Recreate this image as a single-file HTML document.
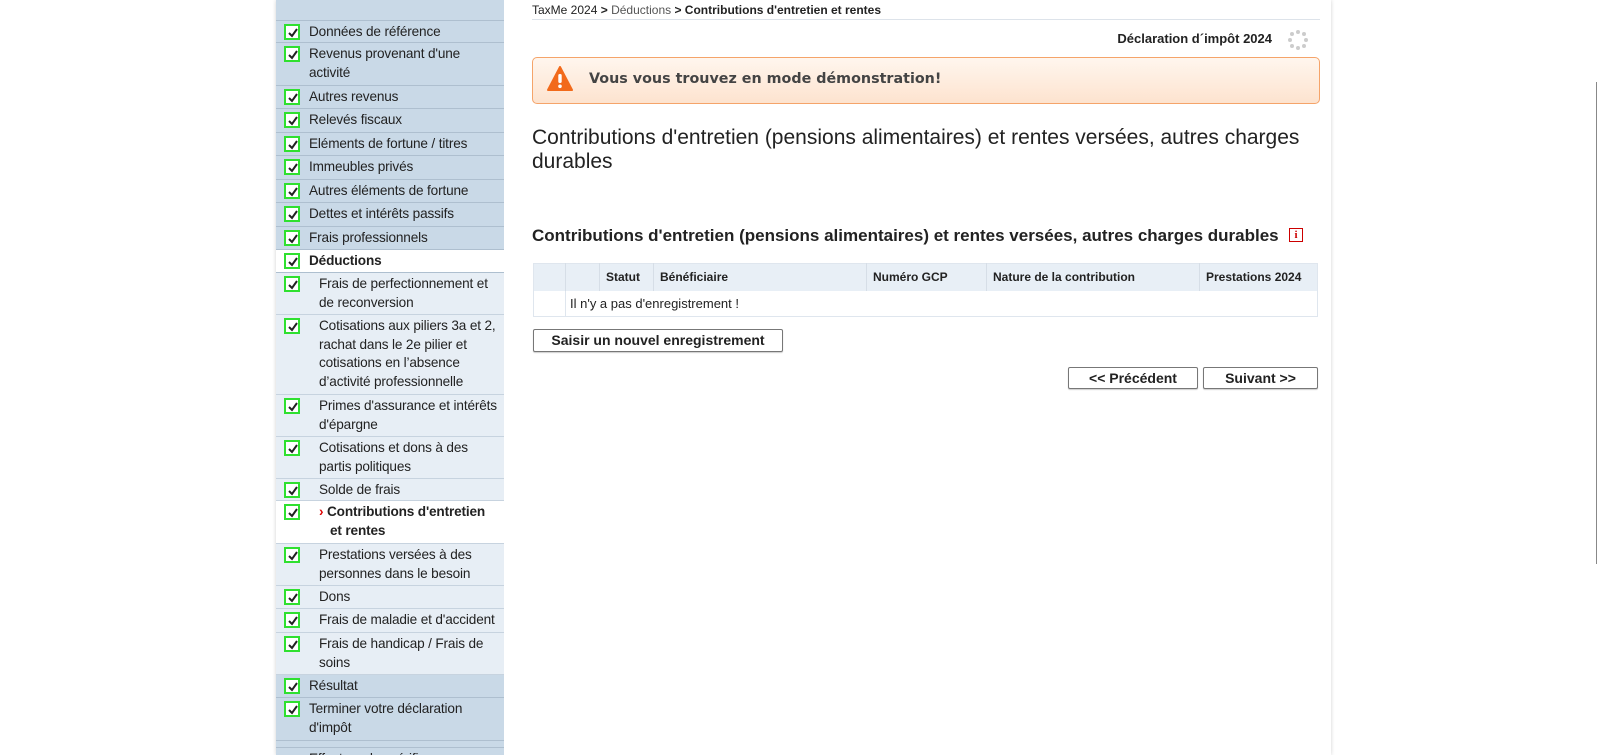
<!DOCTYPE html>
<html><head><meta charset="utf-8"><style>
*{box-sizing:border-box;margin:0;padding:0}
body{width:1600px;height:755px;overflow:hidden;background:#fff;font-family:"Liberation Sans",Arial,sans-serif;color:#222;position:relative}
.wrap{position:absolute;left:276px;top:0;width:1055px;height:755px;background:#fff;box-shadow:0 0 4px rgba(0,0,0,.18)}
.side{position:absolute;left:276px;top:0;width:228px;height:755px;background:#c9d9e7;overflow:hidden}
.row{position:absolute;left:0;width:228px;border-bottom:1px solid #aebfcf;font-size:13.6px;letter-spacing:-0.15px;line-height:18.5px;color:#222;padding:2px 2px 0 33px}
.row.sub{background:#e7eef5;padding-left:43px;border-bottom-color:#c7d3df}
.row.act{background:#fff}
.cb{position:absolute;left:8px;top:3px;width:16px;height:16px;border:2px solid #2fe02f;background:#fff;text-indent:0}
.cb svg{position:absolute;left:1px;top:1px}
.b{font-weight:bold}
.btn{position:absolute;border:1px solid #777;border-radius:2px;background:#fff;font-weight:bold;font-size:14px;text-align:center;line-height:20px;box-shadow:0 1px 1px rgba(0,0,0,.2)}
th,td{font-size:12px;text-align:left}
</style></head><body>
<div class="wrap"></div>
<div class="side">
<div class="row" style="top:0;height:21px"></div>
<div class="row" style="top:21px;height:22px"><span class="cb"><svg width="12" height="12"><path d="M2 6l3 3 5-7" stroke="#222" stroke-width="2" fill="none"/></svg></span>Données de référence</div>
<div class="row" style="top:43px;height:43px"><span class="cb"><svg width="12" height="12"><path d="M2 6l3 3 5-7" stroke="#222" stroke-width="2" fill="none"/></svg></span>Revenus provenant d'une activité</div>
<div class="row" style="top:86px;height:23px"><span class="cb"><svg width="12" height="12"><path d="M2 6l3 3 5-7" stroke="#222" stroke-width="2" fill="none"/></svg></span>Autres revenus</div>
<div class="row" style="top:109px;height:24px"><span class="cb"><svg width="12" height="12"><path d="M2 6l3 3 5-7" stroke="#222" stroke-width="2" fill="none"/></svg></span>Relevés fiscaux</div>
<div class="row" style="top:133px;height:23px"><span class="cb"><svg width="12" height="12"><path d="M2 6l3 3 5-7" stroke="#222" stroke-width="2" fill="none"/></svg></span>Eléments de fortune / titres</div>
<div class="row" style="top:156px;height:24px"><span class="cb"><svg width="12" height="12"><path d="M2 6l3 3 5-7" stroke="#222" stroke-width="2" fill="none"/></svg></span>Immeubles privés</div>
<div class="row" style="top:180px;height:23px"><span class="cb"><svg width="12" height="12"><path d="M2 6l3 3 5-7" stroke="#222" stroke-width="2" fill="none"/></svg></span>Autres éléments de fortune</div>
<div class="row" style="top:203px;height:24px"><span class="cb"><svg width="12" height="12"><path d="M2 6l3 3 5-7" stroke="#222" stroke-width="2" fill="none"/></svg></span>Dettes et intérêts passifs</div>
<div class="row" style="top:227px;height:23px"><span class="cb"><svg width="12" height="12"><path d="M2 6l3 3 5-7" stroke="#222" stroke-width="2" fill="none"/></svg></span>Frais professionnels</div>
<div class="row act b" style="top:250px;height:23px"><span class="cb"><svg width="12" height="12"><path d="M2 6l3 3 5-7" stroke="#222" stroke-width="2" fill="none"/></svg></span>Déductions</div>
<div class="row sub" style="top:273px;height:42px"><span class="cb"><svg width="12" height="12"><path d="M2 6l3 3 5-7" stroke="#222" stroke-width="2" fill="none"/></svg></span>Frais de perfectionnement et de reconversion</div>
<div class="row sub" style="top:315px;height:80px"><span class="cb"><svg width="12" height="12"><path d="M2 6l3 3 5-7" stroke="#222" stroke-width="2" fill="none"/></svg></span>Cotisations aux piliers 3a et 2, rachat dans le 2e pilier et cotisations en l’absence d’activité professionnelle</div>
<div class="row sub" style="top:395px;height:42px"><span class="cb"><svg width="12" height="12"><path d="M2 6l3 3 5-7" stroke="#222" stroke-width="2" fill="none"/></svg></span>Primes d'assurance et intérêts d'épargne</div>
<div class="row sub" style="top:437px;height:42px"><span class="cb"><svg width="12" height="12"><path d="M2 6l3 3 5-7" stroke="#222" stroke-width="2" fill="none"/></svg></span>Cotisations et dons à des partis politiques</div>
<div class="row sub" style="top:479px;height:22px"><span class="cb"><svg width="12" height="12"><path d="M2 6l3 3 5-7" stroke="#222" stroke-width="2" fill="none"/></svg></span>Solde de frais</div>
<div class="row sub act b" style="top:501px;height:43px;padding-left:54px;text-indent:-11px"><span class="cb"><svg width="12" height="12"><path d="M2 6l3 3 5-7" stroke="#222" stroke-width="2" fill="none"/></svg></span><span style="color:#d00">&#8250;</span> Contributions d'entretien<br>et rentes</div>
<div class="row sub" style="top:544px;height:42px"><span class="cb"><svg width="12" height="12"><path d="M2 6l3 3 5-7" stroke="#222" stroke-width="2" fill="none"/></svg></span>Prestations versées à des personnes dans le besoin</div>
<div class="row sub" style="top:586px;height:23px"><span class="cb"><svg width="12" height="12"><path d="M2 6l3 3 5-7" stroke="#222" stroke-width="2" fill="none"/></svg></span>Dons</div>
<div class="row sub" style="top:609px;height:24px"><span class="cb"><svg width="12" height="12"><path d="M2 6l3 3 5-7" stroke="#222" stroke-width="2" fill="none"/></svg></span><span style="white-space:nowrap">Frais de maladie et d'accident</span></div>
<div class="row sub" style="top:633px;height:42px"><span class="cb"><svg width="12" height="12"><path d="M2 6l3 3 5-7" stroke="#222" stroke-width="2" fill="none"/></svg></span>Frais de handicap / Frais de soins</div>
<div class="row" style="top:675px;height:23px"><span class="cb"><svg width="12" height="12"><path d="M2 6l3 3 5-7" stroke="#222" stroke-width="2" fill="none"/></svg></span>Résultat</div>
<div class="row" style="top:698px;height:43px"><span class="cb"><svg width="12" height="12"><path d="M2 6l3 3 5-7" stroke="#222" stroke-width="2" fill="none"/></svg></span>Terminer votre déclaration d'impôt</div>
<div class="row" style="top:741px;height:7px"></div>
<div class="row" style="top:748px;height:30px">Effectuer des vérific</div>
</div>

<div style="position:absolute;left:532px;top:3px;font-size:12px;color:#222">TaxMe 2024 <b>&gt;</b> <span style="color:#555">Déductions</span> <b>&gt; Contributions d'entretien et rentes</b></div>
<div style="position:absolute;left:532px;top:19px;width:788px;border-top:1px solid #dde3ea"></div>
<div style="position:absolute;left:1000px;top:31px;width:272px;text-align:right;font-size:13px;font-weight:bold">Déclaration d´impôt 2024</div>
<svg style="position:absolute;left:1287px;top:29px" width="22" height="22" viewBox="0 0 22 22"><g fill="#ccc"><circle cx="11" cy="3" r="2"/><circle cx="17" cy="5" r="2"/><circle cx="19" cy="11" r="2"/><circle cx="17" cy="17" r="2"/><circle cx="11" cy="19" r="2"/><circle cx="5" cy="17" r="2"/><circle cx="3" cy="11" r="2"/><circle cx="5" cy="5" r="2"/></g></svg>
<div style="position:absolute;left:532px;top:57px;width:788px;height:47px;border:1px solid #f5a46a;border-radius:5px;background:linear-gradient(#fff6ee,#fde3cf)"></div>
<svg style="position:absolute;left:547px;top:66px" width="26" height="26" viewBox="0 0 26 26"><path d="M13 1 L25 24 H1 Z" fill="#f26a1b" stroke="#f26a1b" stroke-width="2" stroke-linejoin="round"/><rect x="11.3" y="8" width="3.4" height="9" rx="1.5" fill="#fff"/><circle cx="13" cy="20.3" r="1.8" fill="#fff"/></svg>
<div style="position:absolute;left:589px;top:71px;font-weight:bold;color:#444;font-family:'DejaVu Sans',sans-serif;font-size:14.3px">Vous vous trouvez en mode démonstration!</div>
<div style="position:absolute;left:532px;top:126px;width:800px;font-size:21px;line-height:24px;color:#222">Contributions d'entretien (pensions alimentaires) et rentes versées, autres charges durables</div>
<div style="position:absolute;left:532px;top:226px;font-size:17px;font-weight:bold;color:#222;white-space:nowrap">Contributions d'entretien (pensions alimentaires) et rentes versées, autres charges durables</div>
<div style="position:absolute;left:1289px;top:228px;width:14px;height:14px;border:1px solid #c00;color:#c00;font-size:11px;font-weight:bold;text-align:center;line-height:12px;font-family:'Liberation Serif',serif">i</div>
<table style="position:absolute;left:533px;top:263px;width:785px;border-collapse:collapse;border:1px solid #dfe6ee;table-layout:fixed">
<tr style="background:#e8eff6;height:27px"><th style="width:32px;border-right:1px solid #d6dee7"></th><th style="width:34px;border-right:1px solid #d6dee7"></th><th style="width:54px;padding-left:6px;border-right:1px solid #d6dee7">Statut</th><th style="width:213px;padding-left:6px;border-right:1px solid #d6dee7">Bénéficiaire</th><th style="width:120px;padding-left:6px;border-right:1px solid #d6dee7">Numéro GCP</th><th style="width:213px;padding-left:6px;border-right:1px solid #d6dee7">Nature de la contribution</th><th style="padding-left:6px">Prestations 2024</th></tr>
<tr style="height:26px"><td style="border-right:1px solid #dfe6ee"></td><td colspan="6" style="padding-left:4px;font-size:13px">Il n'y a pas d'enregistrement !</td></tr>
</table>
<div class="btn" style="left:533px;top:329px;width:250px;height:23px">Saisir un nouvel enregistrement</div>
<div class="btn" style="left:1068px;top:367px;width:130px;height:22px">&lt;&lt; Précédent</div>
<div class="btn" style="left:1203px;top:367px;width:115px;height:22px">Suivant &gt;&gt;</div>
<div style="position:absolute;left:1596px;top:82px;width:1px;height:482px;background:#888"></div>
</body></html>
